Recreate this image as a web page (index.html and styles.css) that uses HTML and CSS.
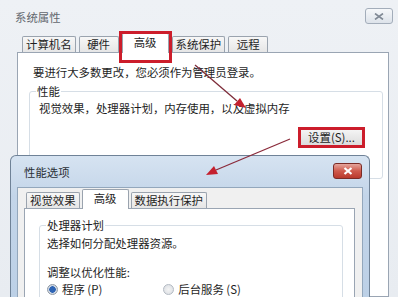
FILE: index.html
```html
<!DOCTYPE html>
<html lang="zh-CN">
<head>
<meta charset="utf-8">
<title>系统属性</title>
<link rel="stylesheet" href="styles.css">
</head>
<body>
<div class="win">
  <div class="titlebar">
    <span class="title">系统属性</span>
    <span class="close">
      <svg width="10" height="7" viewBox="0 0 10 7"><path d="M1 0.5 L9 6.5 M9 0.5 L1 6.5" stroke="#7f8894" stroke-width="1.6" fill="none"/></svg>
    </span>
  </div>
  <div class="tabs">
    <span class="tab">计算机名</span>
    <span class="tab">硬件</span>
    <span class="tab sel hl-tab">高级</span>
    <span class="tab">系统保护</span>
    <span class="tab">远程</span>
  </div>
  <div class="panel">
    <p class="note">要进行大多数更改，您必须作为管理员登录。</p>
    <fieldset class="group">
      <legend>性能</legend>
      <p class="gtext">视觉效果，处理器计划，内存使用，以及虚拟内存</p>
      <div class="btnrow">
        <span class="hl"><button class="btn">设置(S)...</button></span>
      </div>
    </fieldset>
  </div>
</div>

<div class="dialog">
  <div class="dtitlebar">
    <span class="dtitle">性能选项</span>
    <span class="dclose">
      <svg width="10" height="8" viewBox="0 0 10 8"><path d="M1.5 1 L8.5 7 M8.5 1 L1.5 7" stroke="#ffffff" stroke-width="2.2" fill="none"/></svg>
    </span>
  </div>
  <div class="client">
    <div class="dtabs">
      <span class="tab">视觉效果</span>
      <span class="tab sel">高级</span>
      <span class="tab">数据执行保护</span>
    </div>
    <div class="dpanel">
      <fieldset class="dgroup">
        <legend>处理器计划</legend>
        <p class="dline">选择如何分配处理器资源。</p>
        <p class="dline gap">调整以优化性能:</p>
        <div class="radios">
          <span class="radio on"></span><span class="rlabel">程序 (P)</span>
          <span class="radio off"></span><span class="rlabel">后台服务 (S)</span>
        </div>
      </fieldset>
    </div>
  </div>
</div>

<svg class="arrows" width="398" height="297" viewBox="0 0 398 297">
  <path d="M195 65 L237 101" stroke="#7d2b38" stroke-width="1.3" fill="none"/>
  <path d="M246 108 L234 105 L240 98 Z" fill="#c4202e"/>
  <path d="M290 139 L216 170" stroke="#8a2a3a" stroke-width="1.3" fill="none"/>
  <path d="M206 175 L214 166 L218 174 Z" fill="#c4202e"/>
</svg>
</body>
</html>
```
FILE: styles.css
```css
html, body {
  margin: 0;
  padding: 0;
}
body {
  width: 398px;
  height: 297px;
  overflow: hidden;
  position: relative;
  font-family: "Noto Sans CJK SC", "Noto Sans", sans-serif;
  font-size: 11.4px;
  line-height: 16px;
  color: #1e1e1e;
}
p { margin: 0; }

/* outer window */
.win {
  height: 297px;
  background: linear-gradient(#eef1f5, #e8ecf1);
  display: flex;
  flex-direction: column;
  overflow: hidden;
}
.titlebar {
  height: 34px;
  display: flex;
  align-items: center;
  padding-left: 15px;
  flex: none;
}
.title {
  color: #62676e;
}
.close {
  margin-left: auto;
  margin-right: 5px;
  align-self: flex-start;
  margin-top: 8px;
  width: 26px;
  height: 14px;
  border: 1px solid #a3adba;
  border-radius: 3px;
  background: linear-gradient(#f6f8fa, #dde3ea);
  display: flex;
  align-items: center;
  justify-content: center;
}

.tabs {
  height: 18px;
  display: flex;
  align-items: flex-end;
  padding-left: 22px;
  flex: none;
  position: relative;
  z-index: 1;
}
.tab {
  min-width: 40px;
  padding: 0 3px;
  height: 16px;
  box-sizing: border-box;
  text-align: center;
  border: 1px solid #9aa3ae;
  border-bottom: none;
  border-radius: 2px 2px 0 0;
  background: linear-gradient(#f7f7f7, #e6e6e6);
  margin-right: 3px;
  line-height: 14px;
}
.tab.sel {
  height: 20px;
  margin-bottom: -1px;
  background: #ffffff;
  min-width: 47px;
  line-height: 16px;
  position: relative;
}
.hl-tab::after {
  content: "";
  position: absolute;
  left: -4px;
  right: -4px;
  top: -3px;
  bottom: -10px;
  border: 3px solid #cc1d2b;
}

.panel {
  flex: 1;
  margin: 0 9px 0 17px;
  border: 1px solid #9aa5b3;
  background: #ffffff;
  padding: 11px 5px 0 14px;
}
.note {
  padding-left: 1px;
}
.group {
  margin: 3px 0 0 -3px;
  padding: 0 0 30px 6px;
  border: 1px solid #d6dee6;
  border-radius: 3px;
  min-width: 0;
}
.group legend {
  padding: 0 1px;
}
.gtext {
  margin: 1px 0 0 3px;
}
.btnrow {
  display: flex;
  justify-content: flex-end;
  padding-right: 17px;
  margin-top: 11px;
}
.hl {
  display: inline-flex;
  border: 3px solid #cc1d2b;
}
.btn {
  width: 61px;
  height: 15px;
  padding: 0;
  border: none;
  background: linear-gradient(#f4f4f4, #dcdcdc);
  font: inherit;
  line-height: 15px;
  color: #1e1e1e;
}

/* performance options dialog */
.dialog {
  position: absolute;
  left: 10px;
  top: 155px;
  width: 358px;
  height: 141px;
  overflow: hidden;
  border: 1px solid #6f8297;
  border-bottom: none;
  border-radius: 6px 6px 0 0;
  background: linear-gradient(#d6e3f1, #c3d5e9 40px, #bcd0e6);
  display: flex;
  flex-direction: column;
  z-index: 2;
}
.dtitlebar {
  height: 31px;
  display: flex;
  align-items: center;
  padding-left: 13px;
  flex: none;
}
.dtitle {
  color: #2a2f36;
}
.dclose {
  margin-left: auto;
  margin-right: 7px;
  align-self: flex-start;
  margin-top: 7px;
  width: 27px;
  height: 14px;
  border: 1px solid #7a2b26;
  border-radius: 3px;
  background: linear-gradient(#e5a59c, #cf5a4c 50%, #b9392c);
  display: flex;
  align-items: center;
  justify-content: center;
}
.client {
  flex: 1;
  margin: 0 6px 0 6px;
  border: 1px solid #93a7bc;
  border-bottom: none;
  background: #f0f0f0;
  display: flex;
  flex-direction: column;
}
.dtabs {
  height: 20px;
  display: flex;
  align-items: flex-end;
  padding-left: 8px;
  flex: none;
  position: relative;
  z-index: 1;
}
.dtabs .tab {
  margin-right: 2px;
}
.dpanel {
  flex: 1;
  margin: 0 7px 0 6px;
  border: 1px solid #9aa5b3;
  border-bottom: none;
  background: #ffffff;
  padding: 8px 11px 0 14px;
}
.dgroup {
  margin: 0;
  padding: 0 0 20px 6px;
  border: 1px solid #d6dee6;
  border-radius: 3px;
  min-width: 0;
}
.dgroup legend {
  padding: 0 1px;
}
.dline {
  margin: 2px 0 0 1px;
}
.dline.gap {
  margin-top: 13px;
}
.radios {
  display: flex;
  align-items: center;
  margin-top: 1px;
  padding-left: 1px;
}
.radio {
  width: 9px;
  height: 9px;
  border-radius: 50%;
  border: 1px solid #9099a4;
  box-sizing: content-box;
  flex: none;
}
.radio.on {
  background: radial-gradient(circle, #2e64b4 0 3px, #cfd8e4 3.5px);
}
.radio.off {
  background: radial-gradient(circle, #f4f4f4, #d8dce1);
  margin-left: 61px;
  border-color: #b3bac3;
}
.rlabel {
  margin-left: 4px;
}

.arrows {
  position: absolute;
  left: 0;
  top: 0;
  z-index: 5;
  pointer-events: none;
}
```
